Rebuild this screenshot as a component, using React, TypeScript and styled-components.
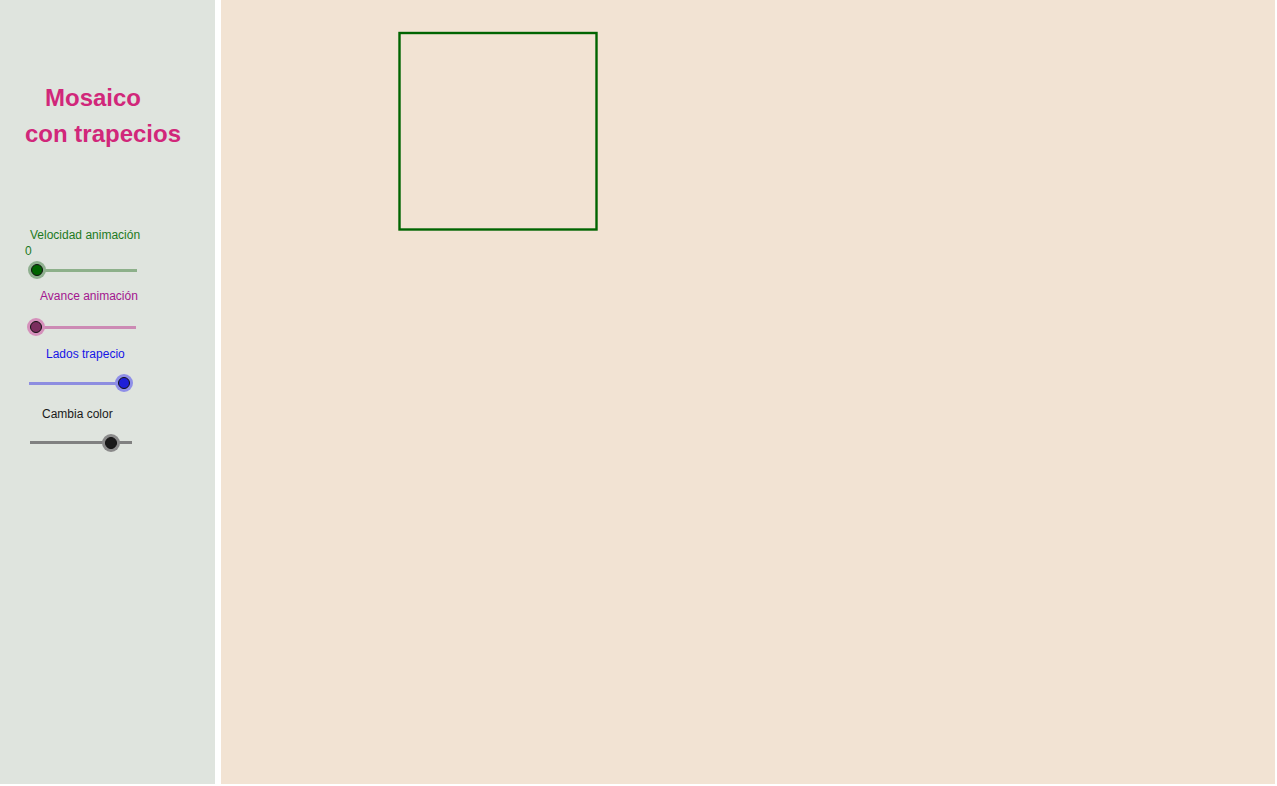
import React from "react";
import styled, { createGlobalStyle } from "styled-components";

const Global = createGlobalStyle`
  html, body { margin: 0; padding: 0; background: #ffffff; }
  body { font-family: "Liberation Sans", Arial, sans-serif; }
`;

const Frame = styled.div`
  display: flex;
  gap: 6px;
  width: 1275px;
  height: 784px;
`;

const Sidebar = styled.div`
  width: 215px;
  flex: none;
  background: #dfe4de;
  display: flex;
  flex-direction: column;
  align-items: flex-start;
  padding-top: 79.5px;
  box-sizing: border-box;
`;

const TitleLine = styled.div<{ $left: number }>`
  margin-left: ${(p) => p.$left}px;
  font-size: 24px;
  font-weight: 700;
  line-height: 36px;
  color: #d1277a;
  white-space: nowrap;
`;

const Label = styled.div<{ $left: number; $mt: number; $color: string }>`
  margin-left: ${(p) => p.$left}px;
  margin-top: ${(p) => p.$mt}px;
  font-size: 12px;
  line-height: 14px;
  color: ${(p) => p.$color};
  white-space: nowrap;
`;

const SliderRow = styled.div<{ $left: number; $width: number; $mt: number }>`
  position: relative;
  margin-left: ${(p) => p.$left}px;
  margin-top: ${(p) => p.$mt}px;
  width: ${(p) => p.$width}px;
  height: 20px;
`;

const Track = styled.div<{ $color: string }>`
  position: absolute;
  left: 0;
  right: 0;
  top: 8.5px;
  height: 3px;
  background: ${(p) => p.$color};
`;

const Knob = styled.div<{ $fill: string; $halo: string }>`
  position: absolute;
  top: 4px;
  width: 12px;
  height: 12px;
  margin-left: -6px;
  box-sizing: border-box;
  border-radius: 50%;
  background: ${(p) => p.$fill};
  border: 1px solid #111;
  box-shadow: 0 0 0 3px ${(p) => p.$halo};
`;

const Main = styled.div`
  flex: 1;
  background: #f2e3d3;
  padding: 31px 0 0 176px;
  box-sizing: border-box;
`;

const Square = styled.svg`
  display: block;
`;

type SliderProps = {
  left: number;
  width: number;
  mt: number;
  knobAt: number;
  track: string;
  fill: string;
  halo: string;
};

function Slider({ left, width, mt, knobAt, track, fill, halo }: SliderProps) {
  return (
    <SliderRow $left={left} $width={width} $mt={mt}>
      <Track $color={track} />
      <Knob $fill={fill} $halo={halo} style={{ left: knobAt - left }} />
    </SliderRow>
  );
}

export default function App() {
  return (
    <>
      <Global />
      <Frame>
        <Sidebar>
          <TitleLine $left={45}>Mosaico</TitleLine>
          <TitleLine $left={25}>con trapecios</TitleLine>

          <Label $left={30} $mt={76.5} $color="#1d7a1d">
            Velocidad animación
          </Label>
          <Label $left={25} $mt={2} $color="#1d7a1d">
            0
          </Label>
          <Slider
            left={36}
            width={101}
            mt={2}
            knobAt={36.5}
            track="#8db08a"
            fill="#006400"
            halo="#8fb08f"
          />

          <Label $left={40} $mt={9} $color="#a3168f">
            Avance animación
          </Label>
          <Slider
            left={36}
            width={100}
            mt={14}
            knobAt={36}
            track="#cc8ab4"
            fill="#7b2d5e"
            halo="#d590bb"
          />

          <Label $left={46} $mt={9.5} $color="#1515e6">
            Lados trapecio
          </Label>
          <Slider
            left={29}
            width={102}
            mt={12.5}
            knobAt={123.5}
            track="#8d8de0"
            fill="#1e1ed8"
            halo="#8f8fe8"
          />

          <Label $left={42} $mt={13.5} $color="#1a1a1a">
            Cambia color
          </Label>
          <Slider
            left={30}
            width={102}
            mt={12}
            knobAt={111}
            track="#808080"
            fill="#1a1a1a"
            halo="#8a8a8a"
          />
        </Sidebar>
        <Main>
          <Square width={203} height={202} viewBox="0 0 203 202">
            <rect
              x={2.5}
              y={2}
              width={197}
              height={196.5}
              fill="none"
              stroke="#006400"
              strokeWidth={2.4}
            />
          </Square>
        </Main>
      </Frame>
    </>
  );
}
